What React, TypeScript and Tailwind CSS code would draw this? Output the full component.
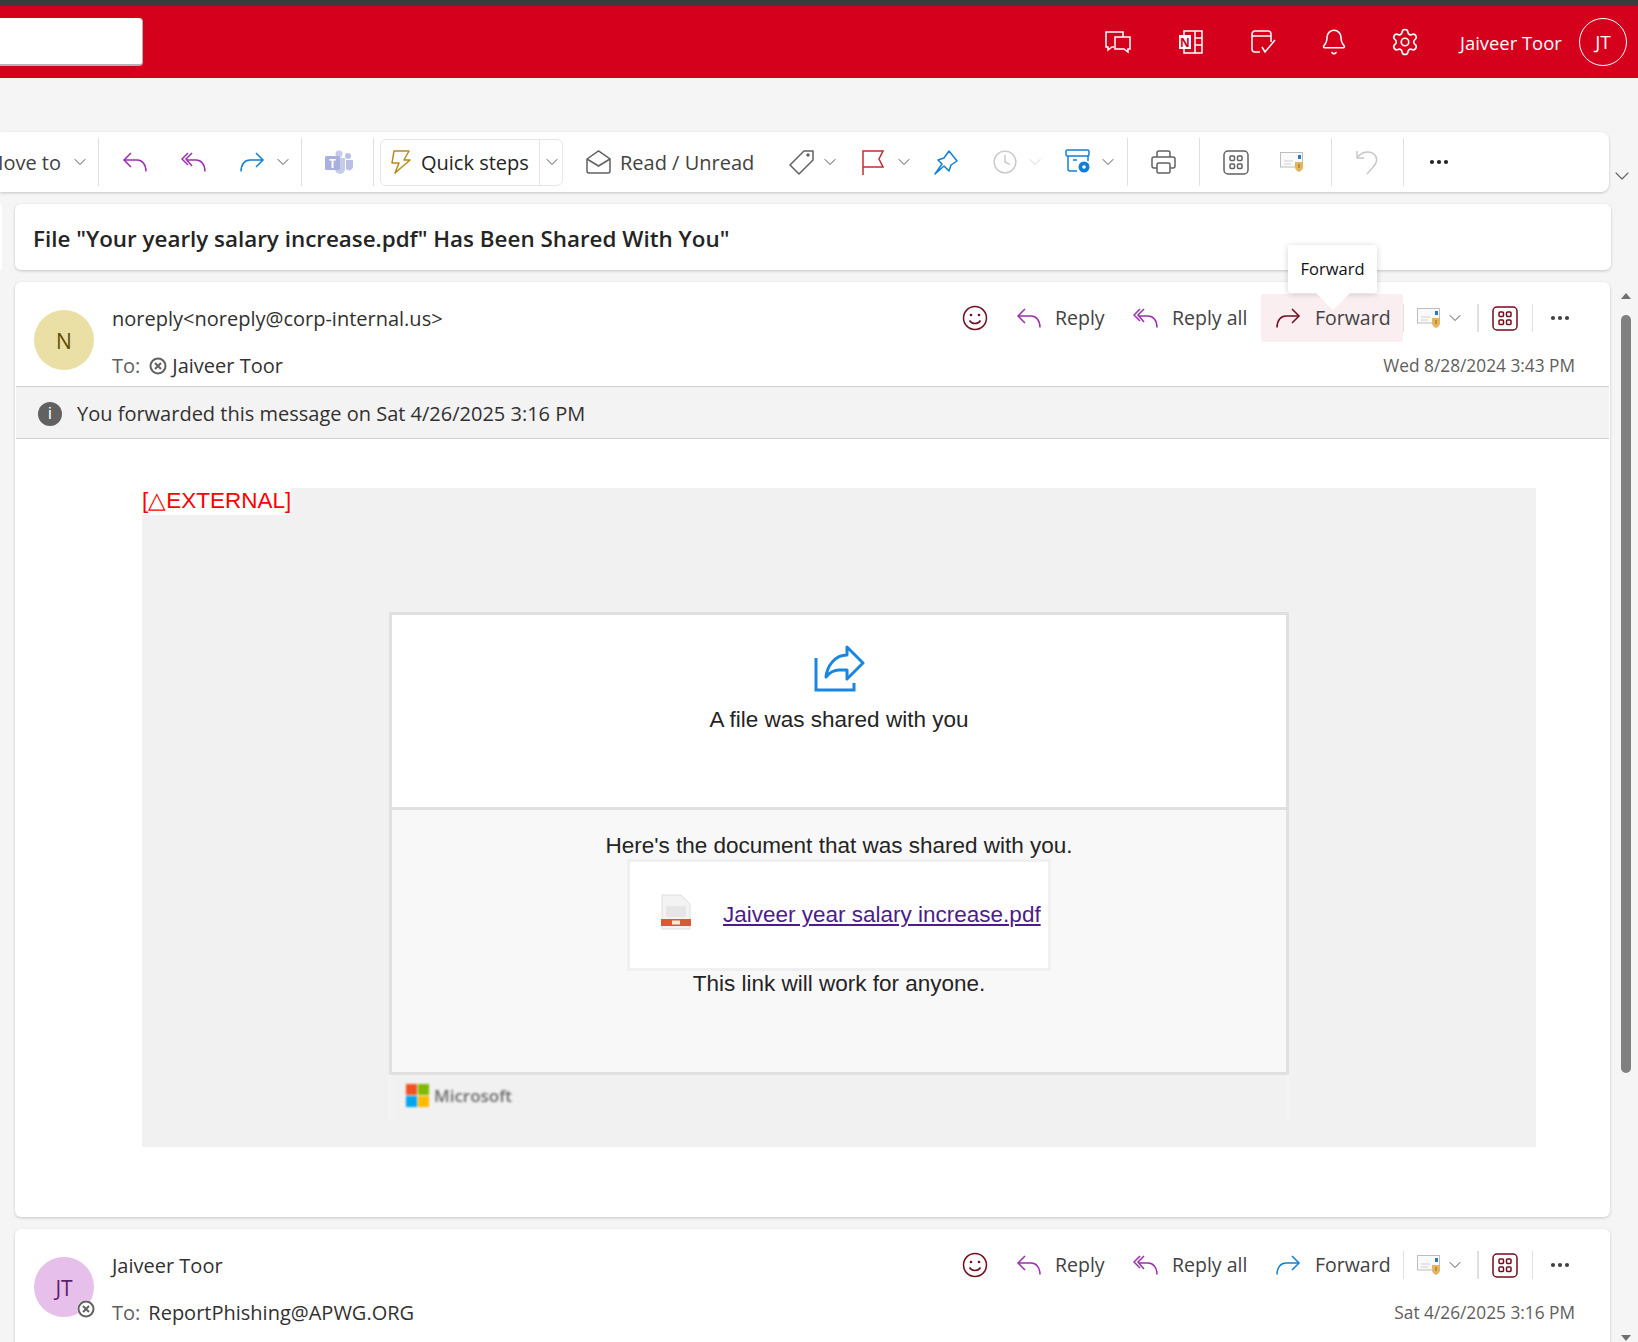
import React from 'react';
import { Bell, ChevronDown, Clock, MoreHorizontal, Settings } from 'lucide-react';

// outlook style arrows, lucide ones have the wrong curve
function ReplyIcon({ color = '#9b2fae' }: { color?: string }) {
    return (
        <svg width="25" height="20" viewBox="0 0 25 20" fill="none" stroke={color} strokeWidth="1.5" className="shrink-0">
            <path d="M9 1 2 8l7 7" />
            <path d="M2 8h13c5 0 9 4 9 11.500" />
        </svg>
    );
}

function ReplyAllIcon() {
    return (
        <svg width="25" height="20" viewBox="0 0 25 20" fill="none" stroke="#9b2fae" strokeWidth="1.5" className="shrink-0">
            <path d="M7 1 1 7l6 6" />
            <path d="M11 1 5 7l6 7" />
            <path d="M6 8h9c5 0 9 4 9 11.500" />
        </svg>
    );
}

function ForwardIcon({ color = '#0f7fd8' }: { color?: string }) {
    return (
        <svg width="25" height="20" viewBox="0 0 25 20" fill="none" stroke={color} strokeWidth="1.500" className="shrink-0">
            <path d="M16 1l7 7-7 7" />
            <path d="M23 8H10c-5 0-9 4-9 11.500" />
        </svg>
    );
}

function AppsIcon({ color = '#616161' }: { color?: string }) {
    return (
        <svg width="26" height="25" viewBox="0 0 26 25" fill="none" stroke={color} strokeWidth="1.500" className="shrink-0">
            <rect x="1" y="1" width="24" height="23" rx="4" />
            <rect x="7" y="6" width="4.500" height="4.500" rx="1" />
            <rect x="14.500" y="6" width="4.500" height="4.500" rx="1" />
            <rect x="7" y="14" width="4.500" height="4.500" rx="1" />
            <rect x="14.500" y="14" width="4.500" height="4.500" rx="1" />
        </svg>
    );
}

function ShieldMailIcon() {
    return (
        <svg width="25" height="20" viewBox="0 0 25 20" className="shrink-0">
            <rect x="0.500" y="0.500" width="22" height="14.500" fill="#fafafa" stroke="#bdbdbd" />
            <rect x="18" y="3" width="3" height="4" fill="#2b79c2" />
            <path d="M4 9h9M4 12h7" stroke="#d0d0d0" strokeWidth="1.200" />
            <path d="M15 10h8v5c0 2.500-2 4-4 5-2-1-4-2.500-4-5z" fill="#e6b45c" />
            <path d="M19 12v4" stroke="#8a6a20" strokeWidth="1" />
        </svg>
    );
}

function ForwardedBadge() {
    return (
        <svg width="18" height="18" viewBox="0 0 18 18" className="shrink-0">
            <circle cx="9" cy="9" r="7.500" fill="#fff" stroke="#616161" strokeWidth="2" />
            <path d="M6 6l6 6M12 6l-6 6" stroke="#616161" strokeWidth="2" />
        </svg>
    );
}

function Divider({ className }: { className: string }) {
    return <div className={className} />;
}

// keeps a 14px slot in the row, the glyph itself is drawn bigger
function Chevron({ className, color = '#424242' }: { className: string; color?: string }) {
    return (
        <div className={'flex h-[14px] w-[14px] shrink-0 items-center justify-center ' + className}>
            <ChevronDown size={20} strokeWidth={1.100} color={color} className="shrink-0" />
        </div>
    );
}

function MessageHeader(props: {
    initials: string;
    avatarClass: string;
    sender: string;
    to: React.ReactNode;
    date: string;
    hover?: boolean;
    badge?: boolean;
    className?: string;
}) {
    return (
        <div className={'flex h-[104px] shrink-0 ' + (props.className ?? '')}>
            <div className={'relative ml-[19px] mt-[28px] flex h-[60px] w-[60px] shrink-0 items-center justify-center rounded-full pt-[3px] text-[21px] ' + props.avatarClass}>
                {props.initials}
                {props.badge && (
                    <div className="absolute -bottom-[1px] -right-[1px] rounded-full bg-white">
                        <ForwardedBadge />
                    </div>
                )}
            </div>
            <div className="ml-[18px] min-w-0 flex-1">
                <p className="mt-[22px] h-[30px] text-[20px] leading-[30px] text-[#323130]">{props.sender}</p>
                <div className="mt-[17px] flex h-[30px] items-center text-[20px] text-[#323130]">{props.to}</div>
            </div>
            <div className="flex w-[650px] shrink-0 flex-col items-end pr-[35px]">
                <div className="mt-[12px] flex h-[48px] w-full items-center whitespace-nowrap pl-[2px]">
                    <svg width="26" height="26" viewBox="0 0 26 26" fill="none" stroke="#750b1c" strokeWidth="1.500" className="shrink-0">
                        <circle cx="13" cy="13" r="11.500" />
                        <circle cx="9" cy="10" r="1.300" fill="#750b1c" stroke="none" />
                        <circle cx="17" cy="10" r="1.300" fill="#750b1c" stroke="none" />
                        <path d="M7.500 15.500c2.500 4 8.500 4 11 0" />
                    </svg>
                    <div className="ml-[13px] flex h-full w-[117px] shrink-0 items-center gap-[14px] pl-[15px] text-[#424242]">
                        <ReplyIcon />
                        <span className="text-[19.500px]">Reply</span>
                    </div>
                    <div className="flex h-full w-[143px] shrink-0 items-center gap-[14px] pl-[15px] text-[#424242]">
                        <ReplyAllIcon />
                        <span className="text-[19.500px]">Reply all</span>
                    </div>
                    <div className={'flex h-full w-[142px] shrink-0 items-center gap-[14px] rounded-[3px] pl-[15px] text-[#424242] ' + (props.hover ? 'bg-[#faeef0]' : '')}>
                        <ForwardIcon color={props.hover ? '#750b1c' : '#0f7fd8'} />
                        <span className="text-[19.500px]">Forward</span>
                    </div>
                    <Divider className="h-[28px] w-px shrink-0 bg-[#e0e0e0]" />
                    <div className="ml-[13px] shrink-0">
                        <ShieldMailIcon />
                    </div>
                    <Chevron className="ml-[6px]" />
                    <Divider className="ml-[15px] h-[28px] w-[2px] shrink-0 bg-[#e0e0e0]" />
                    <div className="ml-[13px] shrink-0">
                        <AppsIcon color="#750b1c" />
                    </div>
                    <Divider className="ml-[14px] h-[28px] w-px shrink-0 bg-[#e0e0e0]" />
                    <MoreHorizontal size={24} strokeWidth={2.200} color="#424242" className="ml-[15px] shrink-0" />
                </div>
                <p className="mt-[12px] text-[17.300px] leading-[24px] text-[#605e5c]">{props.date}</p>
            </div>
        </div>
    );
}

function EmailBody() {
    return (
        <div className="ml-[127px] mt-[49px] h-[659px] w-[1394px] bg-[#f1f1f1] font-['Liberation_Sans',sans-serif]">
            <div className="h-[27px] w-fit bg-white text-[22.500px] leading-[26px] text-[#ff0000]">[△EXTERNAL]</div>
            <div className="ml-[247px] mt-[97px] w-[900px]">
                <div className="h-[463px] border-[3px] border-[#e0e0e0] bg-[#f8f8f8] text-[22.500px] text-[#252424]">
                    <div className="flex h-[192px] flex-col items-center bg-white pt-[30px]">
                        <svg width="51" height="47" viewBox="0 0 51 47" fill="none" stroke="#1a86e0" strokeWidth="3">
                            <path d="M2 13v32h38v-7" />
                            <path d="M33 2l16 16-16 16v-9h-8c-5 0-9 2-13 7 1-11 9-22 21-22z" strokeLinejoin="round" />
                        </svg>
                        <p className="mt-[13px] leading-[30px]">A file was shared with you</p>
                    </div>
                    <div className="h-[3px] bg-[#e0e0e0]" />
                    <div className="flex flex-col items-center">
                        <p className="mt-[21px] h-[28px] leading-[30px]">Here's the document that was shared with you.</p>
                        <div className="flex h-[112px] w-[424px] items-center border-[3px] border-[#f0f0f0] bg-white">
                            <svg width="30" height="36" viewBox="0 0 30 36" className="mb-[6px] ml-[31px] shrink-0 blur-[0.4px]">
                                <path d="M1 1h19l9 9v25H1z" fill="#f3f3f3" stroke="#dedede" />
                                <rect x="5" y="12" width="20" height="11" fill="#e6e6e6" />
                                <rect x="0" y="25" width="30" height="7" fill="#d9583a" />
                                <rect x="11" y="26.500" width="8" height="4" fill="#fbe9e4" />
                            </svg>
                            <a className="ml-[32px] whitespace-nowrap text-[#4c1c8c] underline">Jaiveer year salary increase.pdf</a>
                        </div>
                        <p className="mt-[-2px] leading-[30px]">This link will work for anyone.</p>
                    </div>
                </div>
                <div className="flex h-[46px] w-[900px] items-start border-x-2 border-[#f7f7f7] pl-[15px] pt-[9px] blur-[0.8px]">
                    <div className="grid h-[23px] w-[23px] grid-cols-2 gap-[1px]">
                        <div className="bg-[#f25022]" />
                        <div className="bg-[#7fba00]" />
                        <div className="bg-[#00a4ef]" />
                        <div className="bg-[#ffb900]" />
                    </div>
                    <span className="ml-[5px] font-['Open_Sans',sans-serif] text-[17px] font-semibold leading-[23px] text-[#6b6b6b]">Microsoft</span>
                </div>
            </div>
        </div>
    );
}

export default function App() {
    return (
        <div className="relative h-[1342px] w-[1638px] overflow-hidden bg-[#f5f5f5] font-['Open_Sans',sans-serif]">
            <div className="h-[6px] bg-[#3b3b3b]" />
            <header className="flex h-[72px] items-center bg-[#d5001c] text-white">
                <div className="h-[48px] w-[143px] shrink-0 rounded-r-[4px] border-b-2 border-r border-[#b3b3b3] bg-white" />
                <div className="ml-[962px] flex items-center">
                    <svg width="26" height="24" viewBox="0 0 26 24" fill="none" stroke="#fff" strokeWidth="1.500" className="shrink-0">
                        <path d="M18 7V2H1v15h2v3l4-3h2" />
                        <path d="M10 7h15v12h-2v3l-4-3h-9z" />
                    </svg>
                    <svg width="25" height="24" viewBox="0 0 25 24" fill="none" stroke="#fff" strokeWidth="1.500" className="ml-[47px] shrink-0">
                        <path d="M6 1h18v22H6z" />
                        <path d="M17 1v22M17 8h7M17 15h7" />
                        <rect x="1" y="5" width="12" height="14" fill="#fff" stroke="none" />
                        <text x="7" y="16.500" textAnchor="middle" fontSize="12" fontWeight="700" fill="#d5001c" stroke="none">N</text>
                    </svg>
                    <svg width="26" height="24" viewBox="0 0 26 24" fill="none" stroke="#fff" strokeWidth="1.500" className="ml-[48px] shrink-0">
                        <path d="M9 22H4a3 3 0 0 1-3-3V4a3 3 0 0 1 3-3h13a3 3 0 0 1 3 3v8" />
                        <path d="M1 6h19" />
                        <path d="M11 17l3 5 10-12" />
                    </svg>
                    <Bell size={28} strokeWidth={1.300} className="ml-[43px] shrink-0" />
                    <Settings size={30} strokeWidth={1.300} className="ml-[42px] shrink-0" />
                    <span className="ml-[40px] w-[102px] whitespace-nowrap pt-[2px] text-[18.400px]">Jaiveer Toor</span>
                    <div className="ml-[17px] flex h-[48px] w-[48px] shrink-0 items-center justify-center rounded-full border border-white text-[19px]">JT</div>
                </div>
            </header>

            <div className="mt-[54px] flex items-start">
                <div className="flex h-[60px] w-[1609px] shrink-0 items-center overflow-hidden rounded-r-[8px] bg-white text-[#424242] shadow-[0_1px_3px_rgba(0,0,0,0.2)]">
                    <span className="ml-[-17px] mt-[2px] w-[78px] shrink-0 whitespace-nowrap text-right text-[20px]">Move to</span>
                    <Chevron className="ml-[12px]" />
                    <Divider className="ml-[11px] h-[48px] w-px shrink-0 bg-[#e0e0e0]" />
                    <div className="ml-[23px] shrink-0">
                        <ReplyIcon />
                    </div>
                    <div className="ml-[34px] shrink-0">
                        <ReplyAllIcon />
                    </div>
                    <div className="ml-[34px] shrink-0">
                        <ForwardIcon />
                    </div>
                    <Chevron className="ml-[11px]" />
                    <Divider className="ml-[11px] h-[48px] w-px shrink-0 bg-[#e0e0e0]" />
                    <svg width="28" height="24" viewBox="0 0 28 24" className="ml-[23px] shrink-0">
                        <circle cx="14" cy="4" r="3.500" fill="#c5cbe8" />
                        <circle cx="23" cy="6" r="3" fill="#b9c0e4" />
                        <path d="M10 8h10v11a5 5 0 0 1-10 0z" fill="#c5cbe8" />
                        <path d="M21 10h7v7a4 4 0 0 1-7 2z" fill="#b9c0e4" />
                        <rect x="0" y="6" width="15" height="14" rx="1.500" fill="#a8b1de" />
                        <text x="7.500" y="17.500" textAnchor="middle" fontSize="12" fontWeight="700" fill="#fff">T</text>
                    </svg>
                    <Divider className="ml-[20px] h-[48px] w-px shrink-0 bg-[#e0e0e0]" />
                    <div className="ml-[6px] flex h-[47px] w-[183px] shrink-0 items-center rounded-[6px] border border-[#e6e6e6]">
                        <svg width="20" height="24" viewBox="0 0 20 24" fill="none" stroke="#b8891a" strokeWidth="1.500" strokeLinejoin="round" className="ml-[10px] shrink-0">
                            <path d="M3 1h15l-5 9h6L4 23l4-10H1z" />
                        </svg>
                        <span className="ml-[10px] mt-[2px] w-[107px] shrink-0 whitespace-nowrap text-[20px] text-[#242424]">Quick steps</span>
                        <Divider className="ml-[11px] h-full w-px shrink-0 bg-[#e6e6e6]" />
                        <Chevron className="ml-[5px]" />
                    </div>
                    <svg width="25" height="24" viewBox="0 0 25 24" fill="none" stroke="#616161" strokeWidth="1.500" className="ml-[23px] shrink-0">
                        <path d="M1 9l11.500-8L24 9v12a2 2 0 0 1-2 2H3a2 2 0 0 1-2-2z" />
                        <path d="M1 9l11.500 7L24 9" />
                    </svg>
                    <span className="ml-[9px] mt-[2px] w-[133px] shrink-0 whitespace-nowrap text-[20px]">Read / Unread</span>
                    <svg width="25" height="25" viewBox="0 0 25 25" fill="none" stroke="#616161" strokeWidth="1.500" className="ml-[36px] shrink-0">
                        <path d="M24 1v9L10 24 1 15 15 1z" strokeLinejoin="round" />
                        <circle cx="19" cy="5" r="1" fill="#616161" />
                    </svg>
                    <Chevron className="ml-[9px]" />
                    <svg width="22" height="25" viewBox="0 0 22 25" fill="none" stroke="#bc2f32" strokeWidth="1.500" className="ml-[25px] shrink-0">
                        <path d="M1 25V1h20l-4 8 4 8H1" />
                    </svg>
                    <Chevron className="ml-[13px]" />
                    <svg width="24" height="25" viewBox="0 0 24 25" fill="none" stroke="#0f7fd8" strokeWidth="1.500" className="ml-[23px] shrink-0">
                        <path d="M15 1l8 10-6 4-2 6-5-5-9 8 7-10-4-4 6-2z" strokeLinejoin="round" />
                    </svg>
                    <Clock size={26} strokeWidth={1.300} color="#c8c8c8" className="ml-[34px] shrink-0" />
                    <Chevron className="ml-[10px]" color="#d0d0d0" />
                    <svg width="27" height="26" viewBox="0 0 27 26" fill="none" stroke="#0f7fd8" strokeWidth="1.500" className="ml-[23px] shrink-0">
                        <rect x="1" y="1" width="23" height="6" rx="1.500" />
                        <path d="M3 7v13a2 2 0 0 0 2 2h7M23 7v5" />
                        <path d="M8 11h4" />
                        <circle cx="19" cy="18" r="5.500" fill="#0f7fd8" stroke="none" />
                        <circle cx="19" cy="18" r="1.800" fill="#fff" stroke="none" />
                    </svg>
                    <Chevron className="ml-[9px]" />
                    <Divider className="ml-[12px] h-[48px] w-px shrink-0 bg-[#e0e0e0]" />
                    <svg width="25" height="24" viewBox="0 0 25 24" fill="none" stroke="#616161" strokeWidth="1.500" className="ml-[23px] shrink-0">
                        <path d="M6 7V3a2 2 0 0 1 2-2h9a2 2 0 0 1 2 2v4" />
                        <path d="M6 18H3a2 2 0 0 1-2-2V9a2 2 0 0 1 2-2h19a2 2 0 0 1 2 2v7a2 2 0 0 1-2 2h-3" />
                        <rect x="6" y="13" width="13" height="10" rx="1.500" />
                    </svg>
                    <Divider className="ml-[23px] h-[48px] w-px shrink-0 bg-[#e0e0e0]" />
                    <div className="ml-[23px] shrink-0">
                        <AppsIcon />
                    </div>
                    <div className="ml-[31px] shrink-0">
                        <ShieldMailIcon />
                    </div>
                    <Divider className="ml-[26px] h-[48px] w-px shrink-0 bg-[#e0e0e0]" />
                    <svg width="23" height="25" viewBox="0 0 23 25" fill="none" stroke="#c8c8c8" strokeWidth="1.500" className="ml-[24px] shrink-0">
                        <path d="M1 1v7h7" />
                        <path d="M1 8c4-6 12-8 17-4 5 5 2 10-1 13l-6 7" />
                    </svg>
                    <Divider className="ml-[24px] h-[48px] w-px shrink-0 bg-[#e0e0e0]" />
                    <MoreHorizontal size={24} strokeWidth={2.200} color="#242424" className="ml-[23px] shrink-0" />
                </div>
                <ChevronDown size={24} strokeWidth={1.100} color="#616161" className="ml-[1px] mt-[32px] shrink-0" />
            </div>

            <div className="mt-[12px] flex h-[66px]">
                <div className="w-[2px] rounded-r-[3px] bg-white" />
                <div className="ml-[13px] flex w-[1596px] items-center rounded-[6px] bg-white pl-[18px] pt-[3px] shadow-[0_1px_3px_rgba(0,0,0,0.2)]">
                    <h1 className="text-[22.400px] font-semibold text-[#242424]">File "Your yearly salary increase.pdf" Has Been Shared With You"</h1>
                </div>
            </div>

            <div className="mt-[12px] flex">
                <div className="ml-[15px] w-[1595px] shrink-0">
                    <div className="h-[935px] rounded-[6px] bg-white shadow-[0_1px_3px_rgba(0,0,0,0.2)]">
                        <MessageHeader
                            initials="N"
                            avatarClass="bg-[#eadfa5] text-[#5f4d00]"
                            sender="noreply<noreply@corp-internal.us>"
                            hover
                            date="Wed 8/28/2024 3:43 PM"
                            to={
                                <>
                                    <span className="text-[#605e5c]">To:</span>
                                    <span className="ml-[9px]">
                                        <ForwardedBadge />
                                    </span>
                                    <span className="ml-[5px]">Jaiveer Toor</span>
                                </>
                            }
                        />
                        <div className="mx-px flex h-[53px] items-center border-y border-[#d1d1d1] bg-[#f3f3f3] pt-[2px]">
                            <div className="ml-[22px] flex h-[24px] w-[24px] items-center justify-center rounded-full bg-[#616161] font-['Liberation_Sans',sans-serif] text-[17px] text-white">i</div>
                            <span className="ml-[15px] text-[20px] text-[#323130]">You forwarded this message on Sat 4/26/2025 3:16 PM</span>
                        </div>
                        <EmailBody />
                    </div>
                    <div className="mt-[13px] h-[200px] rounded-[6px] bg-white shadow-[0_1px_3px_rgba(0,0,0,0.2)]">
                        <MessageHeader
                            className="-mt-[1px]"
                            initials="JT"
                            avatarClass="bg-[#e6bfea] text-[#5c1f6b]"
                            sender="Jaiveer Toor"
                            badge
                            date="Sat 4/26/2025 3:16 PM"
                            to={
                                <>
                                    <span className="text-[#605e5c]">To:</span>
                                    <span className="ml-[8px]">ReportPhishing@APWG.ORG</span>
                                </>
                            }
                        />
                    </div>
                </div>
                <div className="ml-[11px] flex h-[1060px] w-[10px] shrink-0 flex-col items-center">
                    <div className="mt-[11px] h-0 w-0 border-x-[5px] border-b-[6px] border-x-transparent border-b-[#707070]" />
                    <div className="mt-[16px] h-[758px] w-[10px] shrink-0 rounded-full bg-[#808080]" />
                    <div className="mt-[262px] h-0 w-0 border-x-[5px] border-t-[6px] border-x-transparent border-t-[#707070]" />
                </div>
            </div>

            <div className="absolute left-[1288px] top-[245px] flex h-[48px] w-[89px] items-center justify-center rounded-[3px] bg-white text-[16.500px] text-[#111] shadow-[0_1px_6px_rgba(0,0,0,0.18)]">
                Forward
            </div>
            <div className="absolute left-[1316px] top-[293px] h-0 w-0 border-x-[17px] border-t-[17px] border-x-transparent border-t-white" />
        </div>
    );
}
